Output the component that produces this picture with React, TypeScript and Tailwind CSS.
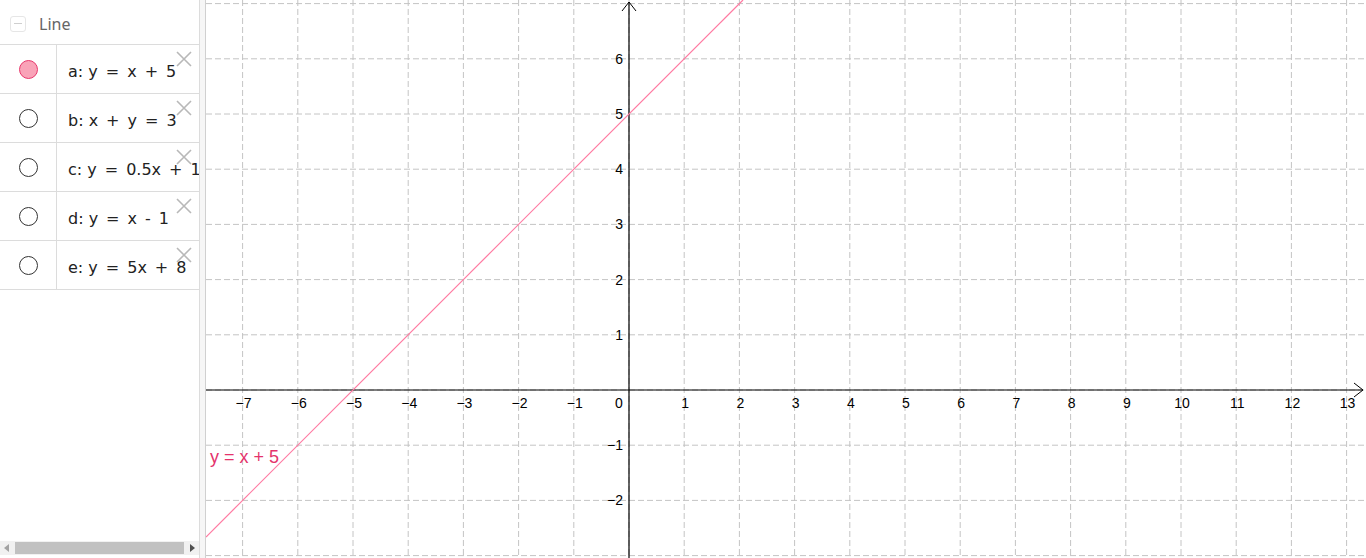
import React from 'react';

const U = 55.2;
const OX = 423; // origin x inside the graph svg
const OY = 390;
const W = 1160;
const H = 558;

const rows = [
  { id: 'a', parts: ['a:', 'y', '=', 'x', '+', '5'], active: true },
  { id: 'b', parts: ['b:', 'x', '+', 'y', '=', '3'], active: false },
  { id: 'c', parts: ['c:', 'y', '=', '0.5x', '+', '1'], active: false },
  { id: 'd', parts: ['d:', 'y', '=', 'x', '-', '1'], active: false },
  { id: 'e', parts: ['e:', 'y', '=', '5x', '+', '8'], active: false },
];

function CloseIcon() {
  return (
    <svg width="18" height="18" viewBox="0 0 18 18" className="absolute right-[6px] top-[5px]">
      <path d="M2 2 L16 16 M16 2 L2 16" stroke="#b8b8b8" strokeWidth="1.6" fill="none" />
    </svg>
  );
}

function AlgebraRow({ parts, active }: { parts: string[]; active: boolean }) {
  // first gap is a normal space, the rest are wider math spaces
  const text = parts[0] + ' ' + parts.slice(1).join('\u2002');
  return (
    <div className="relative flex h-[49px] border-b border-[#dcdcdc]">
      <div className="flex w-[57px] shrink-0 items-center justify-center border-r border-[#dcdcdc]">
        {active ? (
          <span className="block h-[19px] w-[19px] rounded-full border border-[#e8386c] bg-[#f9a3b8]" />
        ) : (
          <span className="block h-[19px] w-[19px] rounded-full border border-[#333]" />
        )}
      </div>
      <div
        className="flex min-w-0 flex-1 items-center overflow-hidden whitespace-pre pl-[11px] pt-[6px] text-[16px] text-[#222]"
        style={{ fontFamily: '"DejaVu Sans", sans-serif' }}
      >
        {text}
      </div>
      <CloseIcon />
    </div>
  );
}

function Graph() {
  const xs: number[] = [];
  for (let k = -7; k <= 13; k++) xs.push(k);
  const ys: number[] = [];
  for (let k = -3; k <= 7; k++) ys.push(k);
  const fmt = (n: number) => (n < 0 ? '\u2212' + Math.abs(n) : String(n));

  return (
    <svg width={W} height={H} className="block" style={{ fontFamily: '"Liberation Sans", Arial, sans-serif' }}>
      {xs.map((k) => (
        <line
          key={'vx' + k}
          x1={OX + k * U}
          x2={OX + k * U}
          y1={0}
          y2={H}
          stroke="#c4c4c4"
          strokeDasharray="6 3"
        />
      ))}
      {ys.map((k) => (
        <line
          key={'hy' + k}
          x1={0}
          x2={W}
          y1={OY - k * U}
          y2={OY - k * U}
          stroke="#c4c4c4"
          strokeDasharray="6 3"
        />
      ))}
      {/* axes */}
      <line x1={0} x2={W - 3} y1={OY} y2={OY} stroke="#000" strokeWidth="1.2" />
      <path d={`M${W - 12} ${OY - 7} L${W - 3} ${OY} L${W - 12} ${OY + 7}`} stroke="#000" fill="none" />
      <line x1={OX} x2={OX} y1={2} y2={H} stroke="#000" strokeWidth="1.2" />
      <path d={`M${OX - 7} 11 L${OX} 2 L${OX + 7} 11`} stroke="#000" fill="none" />

      {xs
        .filter((k) => k !== 0)
        .map((k) => (
          <text key={'lx' + k} x={OX + k * U + 1} y={OY + 18} fontSize="14" textAnchor="middle" fill="#000">
            {fmt(k)}
          </text>
        ))}
      <text x={OX - 10} y={OY + 18} fontSize="14" textAnchor="middle" fill="#000">
        0
      </text>
      {ys
        .filter((k) => k !== 0 && k >= -2 && k <= 6)
        .map((k) => (
          <text key={'ly' + k} x={OX - 6} y={OY - k * U + 5} fontSize="14" textAnchor="end" fill="#000">
            {fmt(k)}
          </text>
        ))}

      {/* line a */}
      <line x1={0} y1={537} x2={537} y2={0} stroke="#ff7aa2" strokeWidth="1.2" />
      <text x={4} y={463} fontSize="18" fill="#e4336c">
        y = x + 5
      </text>
    </svg>
  );
}

export default function App() {
  return (
    <div className="flex h-[558px] w-[1366px] overflow-hidden bg-white" style={{ fontFamily: '"Noto Sans", "DejaVu Sans", sans-serif' }}>
      <aside className="flex w-[200px] shrink-0 flex-col border-r border-[#dcdcdc]">
        <div className="flex h-[45px] items-center gap-[13px] border-b border-[#dcdcdc] pl-[10px] pt-[3px]">
          <span className="flex h-[16px] w-[16px] items-center justify-center rounded-[3px] border border-[#e6e6e6]">
            <span className="block h-[1.5px] w-[8px] bg-[#cfcfcf]" />
          </span>
          <span className="text-[16px] text-[#666]">Line</span>
        </div>
        {rows.map((r) => (
          <AlgebraRow key={r.id} parts={r.parts} active={r.active} />
        ))}
        <div className="mt-auto mb-[3px] flex h-[14px] items-center bg-[#f1f1f1]">
          <svg width="14" height="14" viewBox="0 0 14 14">
            <path d="M9 3 L4 7 L9 11 Z" fill="#a3a3a3" />
          </svg>
          <div className="mx-[1px] h-[12px] flex-1 bg-[#c1c1c1]" />
          <svg width="14" height="14" viewBox="0 0 14 14">
            <path d="M5 3 L10 7 L5 11 Z" fill="#505050" />
          </svg>
        </div>
      </aside>
      <div className="w-[6px] shrink-0 border-r border-[#d0d0d0] bg-[#f6f6f6]" />
      <main className="flex-1">
        <Graph />
      </main>
    </div>
  );
}
